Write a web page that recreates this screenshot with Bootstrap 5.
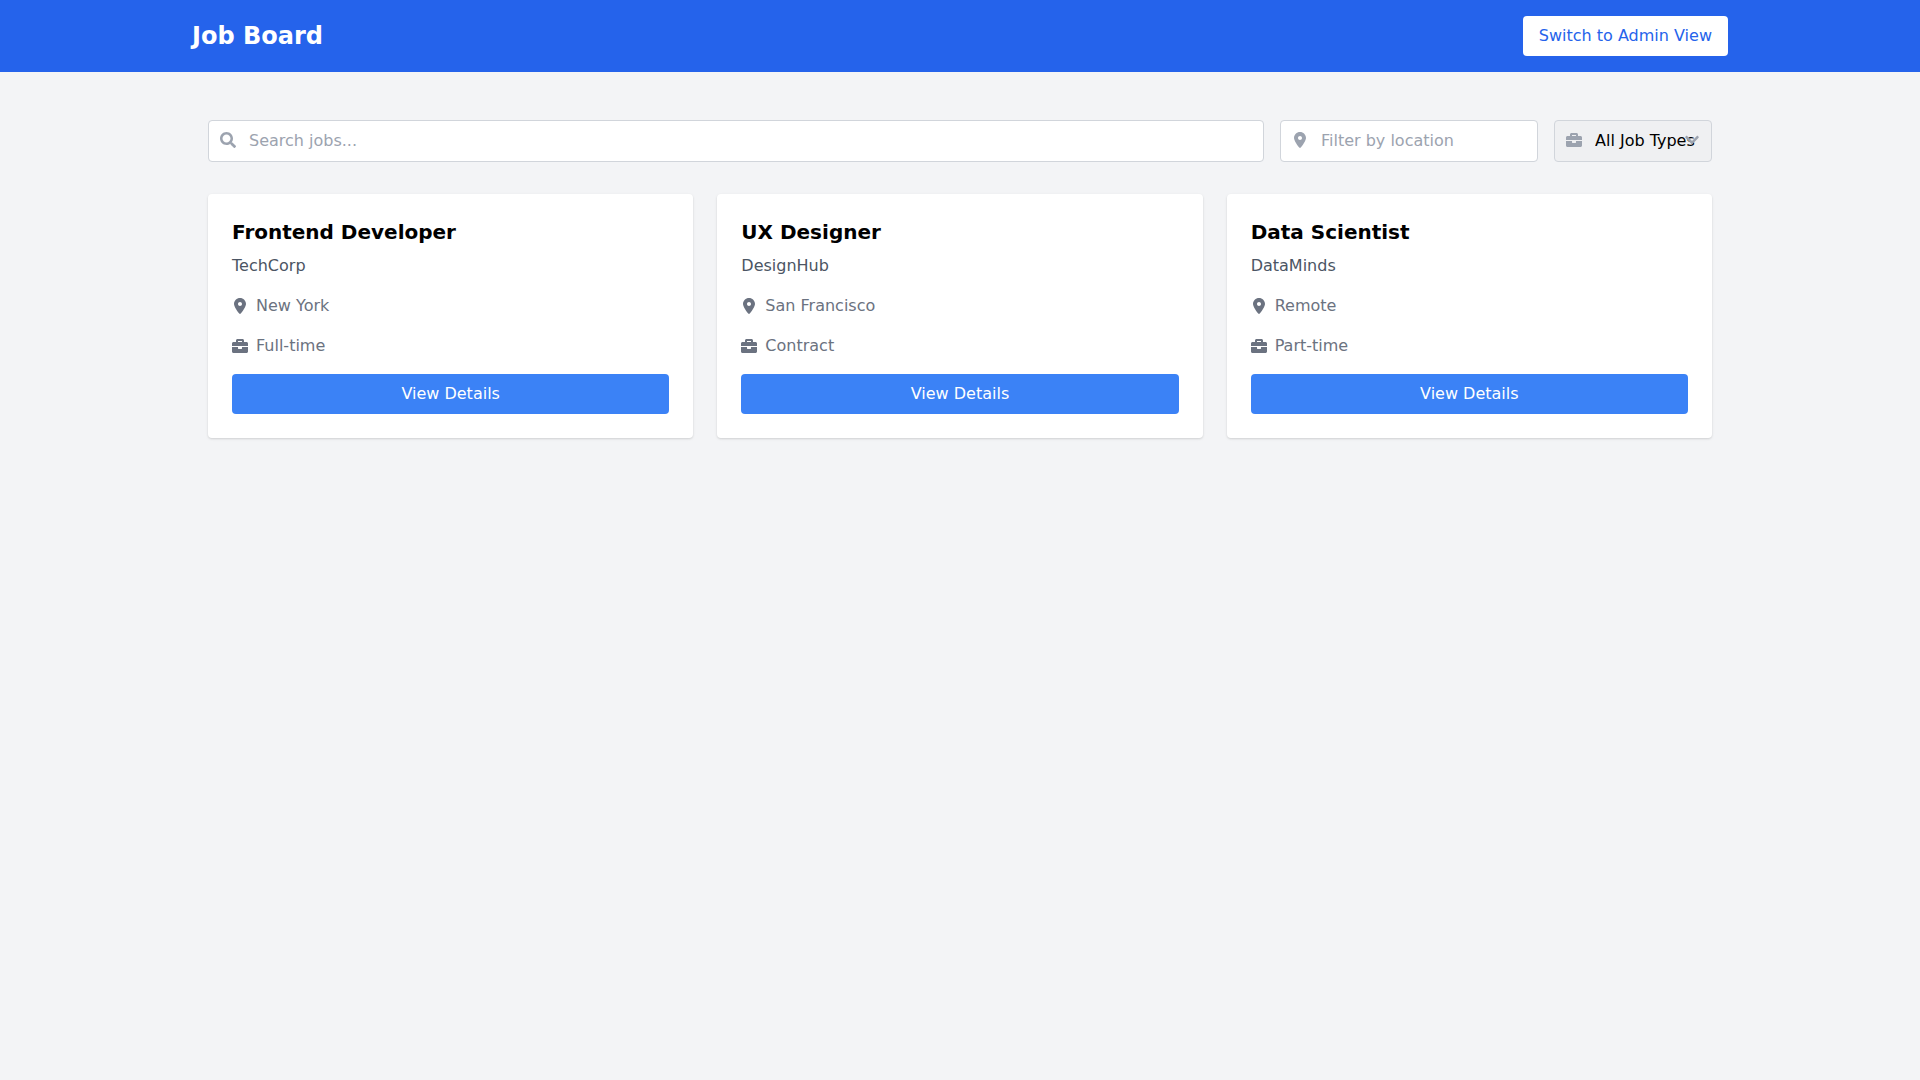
<!DOCTYPE html>
<html lang="en">
<head>
<meta charset="utf-8">
<title>Job Board</title>
<link href="https://cdn.jsdelivr.net/npm/bootstrap@5.3.0/dist/css/bootstrap.min.css" rel="stylesheet">
<style>
body{font-family:"DejaVu Sans",sans-serif;background:#f3f4f6;color:#000;min-height:100vh;font-size:16px}
.jb-head{background:#2563eb;height:72px}
.jb-wrap{max-width:1536px;width:100%;margin:0 auto}
.jb-brand{font-size:24px;line-height:32px;font-weight:700;color:#fff}
.jb-switch{background:#fff;color:#2563eb;border:0;border-radius:4px;height:40px;padding:0 16px;font-size:16px;line-height:24px}
.jb-switch:hover{background:#fff;color:#2563eb}
.jb-main{padding:48px 16px}
.jb-filters{margin-bottom:32px}
.jb-field{position:relative}
.jb-grow{flex:1 1 0}
.jb-loc{width:258px}
.jb-type{width:158px}
.jb-ico{position:absolute;left:12px;top:12px;width:16px;height:16px;fill:#9ca3af;stroke:#9ca3af;stroke-width:.3px;pointer-events:none}
.jb-chev{position:absolute;right:12px;top:12px;width:16px;height:16px;fill:#9ca3af;stroke:#9ca3af;stroke-width:.3px;pointer-events:none}
.jb-input{height:42px;border:1px solid #d1d5db;border-radius:4px;padding:7px 16px 9px 40px;font-size:16px;line-height:24px;color:#000;background-color:#fff}
.jb-input::placeholder{color:#9ca3af;opacity:1}
select.jb-input{background-color:#eff0f2;background-image:none;appearance:none;padding:8px 0 8px 40px;border-radius:4px}
.jb-card{background:#fff;border-radius:4px;box-shadow:0 1px 3px rgba(0,0,0,.1),0 1px 2px rgba(0,0,0,.06);padding:24px;height:100%}
.jb-title{font-size:20px;line-height:28px;font-weight:700;margin:0 0 8px;color:#000}
.jb-company{font-size:16px;line-height:24px;color:#4b5563;margin-bottom:16px}
.jb-meta{font-size:16px;line-height:24px;color:#6b7280;margin-bottom:16px;gap:8px}
.jb-meta svg{width:16px;height:16px;fill:#6b7280;stroke:#6b7280;stroke-width:.3px;flex:none}
.jb-view{background:#3b82f6;color:#fff;border:0;border-radius:4px;height:40px;padding:8px 16px;font-size:16px;line-height:24px}
.jb-view:hover{background:#3b82f6;color:#fff}
</style>
</head>
<body>
<svg width="0" height="0" class="d-none">
<symbol id="i-search" viewBox="0 0 512 512"><path d="M505 442.7L405.3 343c-4.5-4.5-10.6-7-17-7H372c27.6-35.3 44-79.7 44-128C416 93.1 322.9 0 208 0S0 93.1 0 208s93.1 208 208 208c48.3 0 92.7-16.4 128-44v16.3c0 6.4 2.5 12.5 7 17l99.7 99.7c9.4 9.4 24.6 9.4 33.9 0l28.3-28.3c9.4-9.4 9.4-24.6.1-34zM208 336c-70.7 0-128-57.2-128-128 0-70.7 57.2-128 128-128 70.7 0 128 57.2 128 128 0 70.7-57.2 128-128 128z"/></symbol>
<symbol id="i-pin" viewBox="0 0 384 512"><path d="M215.7 499.2C267 435 384 279.4 384 192C384 86 298 0 192 0S0 86 0 192c0 87.4 117 243 168.3 307.2c12.3 15.3 35.1 15.3 47.4 0zM192 256c-35.3 0-64-28.7-64-64s28.7-64 64-64s64 28.7 64 64s-28.7 64-64 64z"/></symbol>
<symbol id="i-case" viewBox="0 0 512 512"><path d="M320 336c0 8.84-7.16 16-16 16h-96c-8.84 0-16-7.16-16-16v-48H0v144c0 25.6 22.4 48 48 48h416c25.6 0 48-22.4 48-48V288H320v48zm144-208h-80V80c0-25.6-22.4-48-48-48H176c-25.6 0-48 22.4-48 48v48H48c-25.6 0-48 22.4-48 48v80h512v-80c0-25.6-22.4-48-48-48zm-144 0H192V96h128v32z"/></symbol>
<symbol id="i-chev" viewBox="0 0 448 512"><path d="M207.029 381.476L12.686 187.132c-9.373-9.373-9.373-24.569 0-33.941l22.667-22.667c9.357-9.357 24.522-9.375 33.901-.04L224 284.505l154.745-154.021c9.379-9.335 24.544-9.317 33.901.04l22.667 22.667c9.373 9.373 9.373 24.569 0 33.941L240.971 381.476c-9.373 9.372-24.569 9.372-33.942 0z"/></symbol>
</svg>

<header class="jb-head d-flex align-items-center">
  <div class="jb-wrap d-flex align-items-center justify-content-between">
    <div class="jb-brand">Job Board</div>
    <button type="button" class="btn jb-switch">Switch to Admin View</button>
  </div>
</header>

<main class="jb-wrap jb-main">
  <div class="d-flex gap-3 jb-filters">
    <div class="jb-field jb-grow">
      <svg class="jb-ico"><use href="#i-search"/></svg>
      <input type="text" class="form-control jb-input" placeholder="Search jobs...">
    </div>
    <div class="jb-field jb-loc">
      <svg class="jb-ico"><use href="#i-pin"/></svg>
      <input type="text" class="form-control jb-input" placeholder="Filter by location">
    </div>
    <div class="jb-field jb-type">
      <svg class="jb-ico"><use href="#i-case"/></svg>
      <select class="form-select jb-input"><option>All Job Types</option></select>
      <svg class="jb-chev"><use href="#i-chev"/></svg>
    </div>
  </div>

  <div class="row g-4">
    <div class="col-4">
      <div class="jb-card">
        <h3 class="jb-title">Frontend Developer</h3>
        <div class="jb-company">TechCorp</div>
        <div class="jb-meta d-flex align-items-center"><svg><use href="#i-pin"/></svg><span>New York</span></div>
        <div class="jb-meta d-flex align-items-center"><svg><use href="#i-case"/></svg><span>Full-time</span></div>
        <button type="button" class="btn jb-view w-100">View Details</button>
      </div>
    </div>
    <div class="col-4">
      <div class="jb-card">
        <h3 class="jb-title">UX Designer</h3>
        <div class="jb-company">DesignHub</div>
        <div class="jb-meta d-flex align-items-center"><svg><use href="#i-pin"/></svg><span>San Francisco</span></div>
        <div class="jb-meta d-flex align-items-center"><svg><use href="#i-case"/></svg><span>Contract</span></div>
        <button type="button" class="btn jb-view w-100">View Details</button>
      </div>
    </div>
    <div class="col-4">
      <div class="jb-card">
        <h3 class="jb-title">Data Scientist</h3>
        <div class="jb-company">DataMinds</div>
        <div class="jb-meta d-flex align-items-center"><svg><use href="#i-pin"/></svg><span>Remote</span></div>
        <div class="jb-meta d-flex align-items-center"><svg><use href="#i-case"/></svg><span>Part-time</span></div>
        <button type="button" class="btn jb-view w-100">View Details</button>
      </div>
    </div>
  </div>
</main>
</body>
</html>
